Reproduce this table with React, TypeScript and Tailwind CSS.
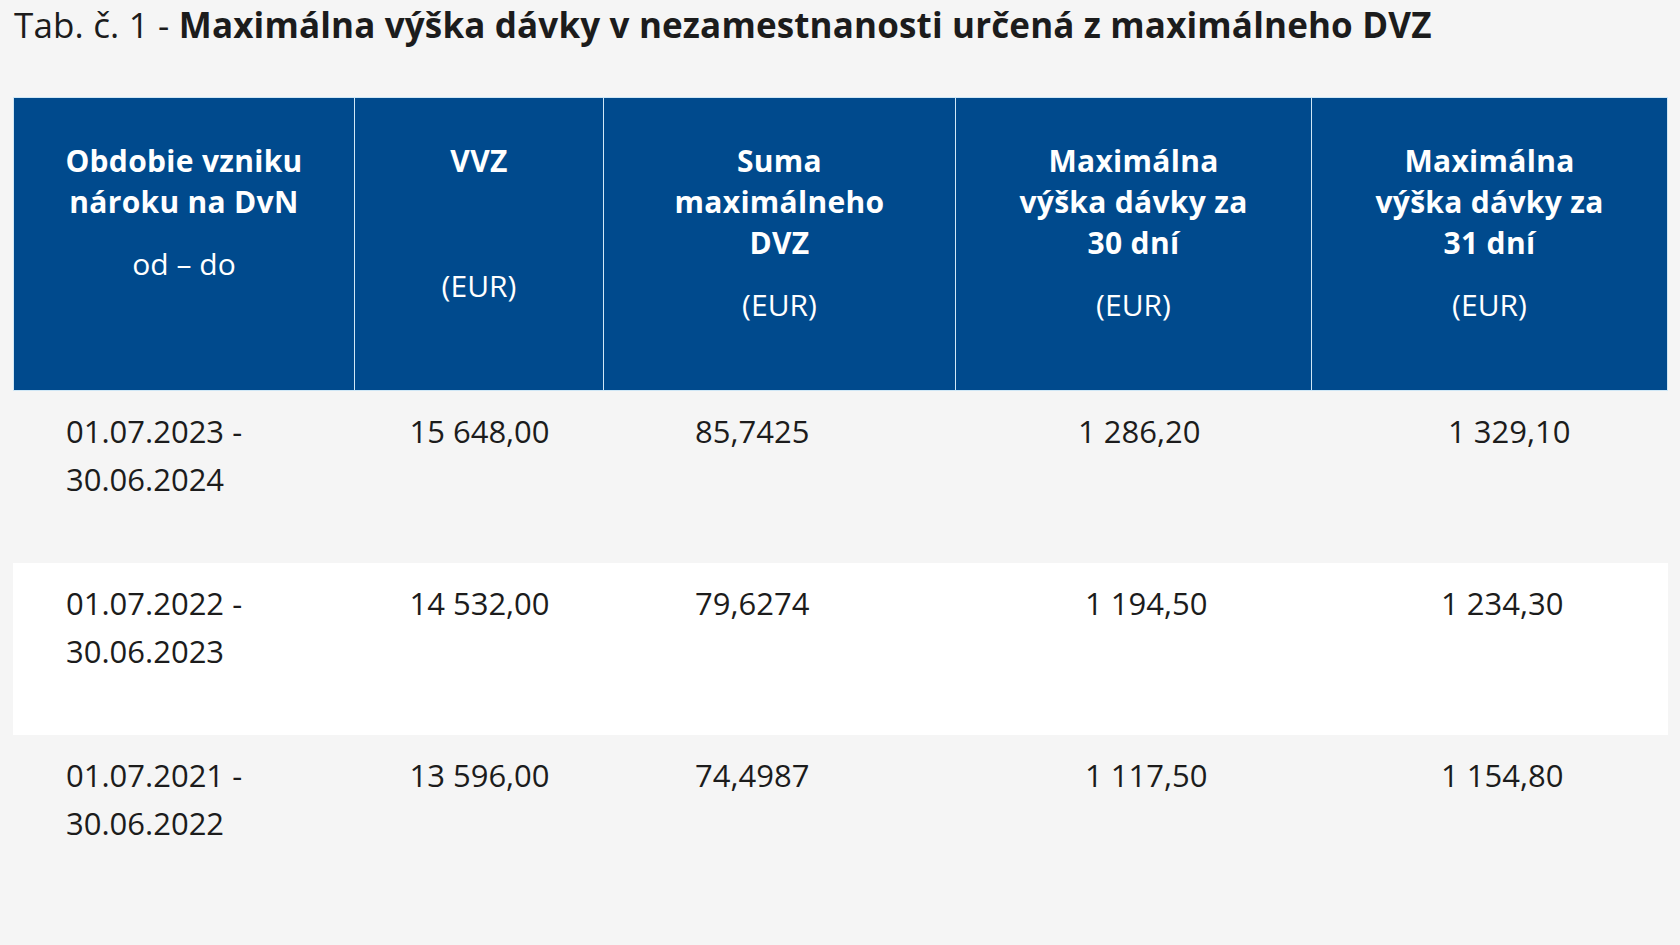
const headerCols = [
  { bold: ["Obdobie vzniku", "nároku na DvN"], sub: "od – do", spacer: false },
  { bold: ["VVZ"], sub: "(EUR)", spacer: true },
  { bold: ["Suma", "maximálneho", "DVZ"], sub: "(EUR)", spacer: false },
  { bold: ["Maximálna", "výška dávky za", "30 dní"], sub: "(EUR)", spacer: false },
  { bold: ["Maximálna", "výška dávky za", "31 dní"], sub: "(EUR)", spacer: false },
];

const rows = [
  {
    from: "01.07.2023 -",
    to: "30.06.2024",
    vvz: "15 648,00",
    dvz: "85,7425",
    d30: "1 286,20",
    d31: "1 329,10",
    shifted: true,
  },
  {
    from: "01.07.2022 -",
    to: "30.06.2023",
    vvz: "14 532,00",
    dvz: "79,6274",
    d30: "1 194,50",
    d31: "1 234,30",
    shifted: false,
  },
  {
    from: "01.07.2021 -",
    to: "30.06.2022",
    vvz: "13 596,00",
    dvz: "74,4987",
    d30: "1 117,50",
    d31: "1 154,80",
    shifted: false,
  },
];

const gridCols = "grid grid-cols-[342px_249px_352px_356px_356px]";

export default function App() {
  return (
    <div className="min-h-screen w-full bg-[#f5f5f5] font-['Open_Sans',sans-serif] text-[#1c1c1c]">
      <h1 className="pl-[14px] pt-[2px] text-[35px] leading-[46px] tracking-[0.15px]">
        Tab. č. 1 - <span className="font-bold">Maximálna výška dávky v nezamestnanosti určená z maximálneho DVZ</span>
      </h1>

      <div className="ml-[13px] mt-[49px] w-[1655px]">
        <div className={`${gridCols} h-[294px] bg-[#004a8d] text-white`}>
          {headerCols.map((col, i) => (
            <div
              className={`flex flex-col items-center gap-[21px] border-t border-r border-b border-[#cfe7f6] pt-[42px] text-center text-[30px] leading-[42px] ${i === 0 ? "border-l" : ""}`}
              key={i}
            >
              <div className="font-bold leading-[41px] tracking-[0.3px]">
                {col.bold.map((line) => (
                  <div key={line}>{line}</div>
                ))}
              </div>
              {col.spacer ? <div>&nbsp;</div> : null}
              <div>{col.sub}</div>
            </div>
          ))}
        </div>

        {rows.map((row, i) => (
          <div
            className={`${gridCols} h-[172px] text-[31px] leading-[48px] ${i === 1 ? "bg-white" : ""}`}
            key={row.from}
          >
            <div className="pl-[53px] pt-[16px]">
              <div>{row.from}</div>
              <div>{row.to}</div>
            </div>
            <div className="pt-[16px] text-center">{row.vvz}</div>
            <div className="pl-[91px] pt-[16px]">{row.dvz}</div>
            <div className={`pt-[16px] ${row.shifted ? "pl-[122px]" : "pl-[129px]"}`}>{row.d30}</div>
            <div className={`pt-[16px] ${row.shifted ? "pl-[136px]" : "pl-[129px]"}`}>{row.d31}</div>
          </div>
        ))}
      </div>
    </div>
  );
}
